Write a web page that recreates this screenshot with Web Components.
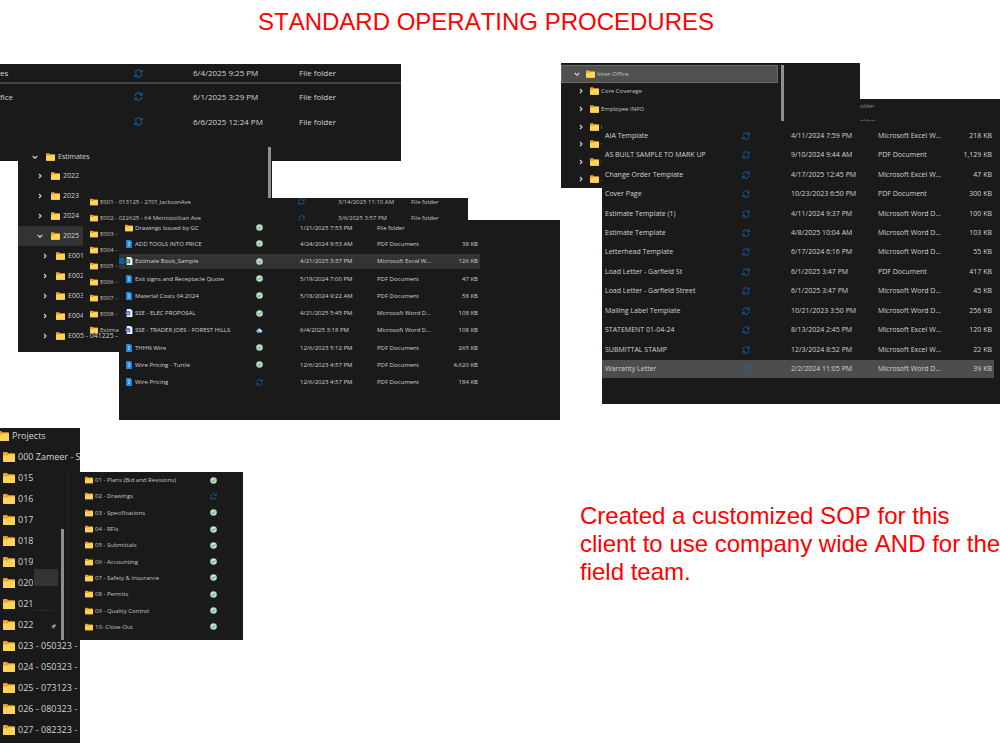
<!DOCTYPE html>
<html lang="en">
<head>
<meta charset="UTF-8">
<meta name="viewport" content="width=device-width, initial-scale=1.0">
<title>Standard Operating Procedures</title>
<style>
    body {
        margin: 0;
        background: white;
        font-family: "Open Sans", "Noto Sans", sans-serif;
        overflow-x: hidden;
    }
    /* explorer windows are pasted freely over each other */
    explorer-window {
        position: absolute;
    }
    #shares { left: 0; top: 1px; width: 401px; height: 97px; --row: 25px; --first: 18px; --text: 8px; --status: 9px; }
    #estimates { left: 18px; top: 84px; width: 254px; height: 205px; --row: 20px; --first: 19px; --text: 7px; --start: 12px; --indent: 5px; }
    #jobs { left: 83px; top: 135px; width: 385px; height: 133px; --row: 16px; --first: 12px; --first-align: top; --text: 6px; --icon: 8px; --status: 7px; --overflow: visible; --color: #c4c4c4; }
    #pricing { left: 119px; top: 157px; width: 441px; height: 200px; --row: 17px; --first: 15px; --text: 6px; --icon: 8px; --status: 7px; --table-height: 171px; }
    #projects { left: 0; top: 0; width: 80px; height: 315px; --row: 21px; --first: 15px; --first-gap: 3px; --text: 9px; --start: -3px; --indent: 6px; --folder: 12px; --folder-height: 10px; }
    #sections { left: 33px; top: 44px; width: 210px; height: 168px; --row: 16px; --first: 16px; --text: 6px; --icon: 8px; --status: 7px; --table-height: 163px; --color: #c4c4c4; }
    #folders { right: 0; top: 36px; width: 140px; height: 60px; --row: 16px; --first: 14px; --text: 6px; --color: #8c8c8c; }
    #office { left: 1px; top: 0; width: 299px; height: 125px; --row: 18px; --first: 18px; --text: 6px; --start: 11px; --indent: 4px; --chevron-gap: 4px; --label-gap: 2px; --folder: 9px; --selected: #505050; --color: #c4c4c4; }
    #templates { right: 0; top: 58px; width: 398px; height: 283px; --row: 19px; --first: 19px; --text: 7px; --status: 8px; --table-height: 253px; --selected: #4d4d4d; }
</style>
</head>
<body>
    <sop-board>
        <span slot="title">STANDARD OPERATING PROCEDURES</span>
        <explorer-window slot="estimating" id="shares"><file-table source="shares"></file-table></explorer-window>
        <explorer-window slot="estimating" id="estimates" bar><folder-tree source="estimates"></folder-tree></explorer-window>
        <explorer-window slot="estimating" id="jobs"><file-table source="jobs"></file-table></explorer-window>
        <explorer-window slot="estimating" id="pricing"><file-table source="pricing"></file-table></explorer-window>
        <explorer-window slot="projects" id="projects"><folder-tree source="projects"></folder-tree></explorer-window>
        <explorer-window slot="projects" id="sections"><nav-strip></nav-strip><file-table source="sections"></file-table></explorer-window>
        <explorer-window slot="office" id="folders"><file-table source="folders"></file-table></explorer-window>
        <explorer-window slot="office" id="office" bar><folder-tree source="office"></folder-tree></explorer-window>
        <explorer-window slot="office" id="templates"><file-table source="templates"></file-table></explorer-window>
        <span slot="note">Created a customized SOP for this<br>client to use company wide AND for the<br>field team.</span>
    </sop-board>

<script>
    const ICONS = {
        folder: `<svg viewBox="0 0 12 10"><path d="M0 .8Q0 0 .8 0H4l1.300 1.300h5.900q.8 0 .8.8V9.200q0 .8-.8.8H.8Q0 10 0 9.200Z" fill="#eba51f"/><path d="M0 3.400h4.600l1-1H11.200q.8 0 .8.8V9.200q0 .8-.8.8H.8Q0 10 0 9.200Z" fill="#ffd35c"/></svg>`,
        sync: `<svg viewBox="0 0 16 16" fill="none" stroke="#0f6cb8" stroke-width="1.700"><path d="M2 7A6 6 0 0 1 13.200 4.500M14.500 1v4.500H10M14 9A6 6 0 0 1 2.800 11.500M1.500 15v-4.500H6"/></svg>`,
        ok: `<svg viewBox="0 0 16 16"><circle cx="8" cy="8" r="7.500" fill="#b9dfc2"/><path d="M4.500 8.200l2.500 2.500 4.500-5" fill="none" stroke="#3f6a4a" stroke-width="1.600"/></svg>`,
        cloud: `<svg viewBox="0 0 16 16"><path d="M4 12.500a3 3 0 0 1 0-6 4 4 0 0 1 7.500-.5A3.300 3.300 0 0 1 12 12.500Z" fill="#b9dcf7"/><path d="M4 12.500a3 3 0 0 1 0-5l8 5Z" fill="#5da4e0"/></svg>`,
        pdf: `<svg viewBox="0 0 12 14"><path d="M1 0H8.500l2.500 2.500V14H1Z" fill="#1f8fe6"/><path d="M4 4.500h4M4 7h4M4 9.500h4" stroke="#c4e3fb" stroke-width="1.200"/></svg>`,
        excel: `<svg viewBox="0 0 12 14"><path d="M2 0h7l3 3v11H2Z" fill="#f2f5f2"/><rect y="4" width="8" height="7" rx="1" fill="#1b8a4b"/><path d="M2.500 5.500l3 4M5.500 5.500l-3 4" stroke="#fff"/></svg>`,
        word: `<svg viewBox="0 0 12 14"><path d="M2 0h7l3 3v11H2Z" fill="#f2f4fa"/><rect y="4" width="8" height="7" rx="1" fill="#2860c8"/><path d="M1.800 5.500l1 4 1.200-3 1.200 3 1-4" fill="none" stroke="#fff" stroke-width=".8"/></svg>`,
        right: `<svg viewBox="0 0 10 10" fill="none" stroke="#d0d0d0" stroke-width="1.100"><path d="M4 3L6 5 4 7"/></svg>`,
        down: `<svg viewBox="0 0 10 10" fill="none" stroke="#d0d0d0" stroke-width="1.100"><path d="M2.700 4L5 6.200 7.300 4"/></svg>`,
        pin: `<svg viewBox="0 0 10 10"><path d="M6 1l3 3-1 .5L6.500 6 6 8.500 4 6.500 1 9l2.500-3L1.500 4 4 3.500 5.500 2Z" fill="#8d969e"/></svg>`
    };

    // cols: widths of name, status, date, type, size
    const TABLES = {
        shares: {
            cols: [133, 60, 106, 102],
            line: true,
            rows: [
                { name: 'es', status: 'sync', date: '6/4/2025 9:25 PM', type: 'File folder' },
                { name: 'fice', status: 'sync', date: '6/1/2025 3:29 PM', type: 'File folder' },
                { name: '', status: 'sync', date: '6/6/2025 12:24 PM', type: 'File folder' }
            ]
        },
        jobs: {
            cols: [214, 41, 73, 57],
            pad: 7,
            rows: [
                { icon: 'folder', name: 'E001 - 013125 - 2701 JacksonAve', status: 'sync', date: '3/14/2025 11:10 AM', type: 'File folder' },
                { icon: 'folder', name: 'E002 - 022625 - 64 Metropolitan Ave', status: 'sync', date: '3/6/2025 3:57 PM', type: 'File folder' },
                { icon: 'folder', name: 'E003 - 0' },
                { icon: 'folder', name: 'E004 - 0' },
                { icon: 'folder', name: 'E005 - 0' },
                { icon: 'folder', name: 'E006 - 0' },
                { icon: 'folder', name: 'E007 - 0' },
                { icon: 'folder', name: 'E008 - 0' },
                { icon: 'folder', name: 'Estimates' }
            ]
        },
        pricing: {
            cols: [136, 45, 77, 60, 43],
            pad: 6,
            rows: [
                { icon: 'folder', name: 'Drawings Issued by GC', status: 'ok', date: '1/21/2025 7:53 PM', type: 'File folder', size: '' },
                { icon: 'pdf', name: 'ADD TOOLS INTO PRICE', status: 'ok', date: '4/24/2024 9:53 AM', type: 'PDF Document', size: '38 KB' },
                { icon: 'excel', name: 'Estimate Book_Sample', status: 'ok', date: '4/21/2025 3:37 PM', type: 'Microsoft Excel W...', size: '126 KB', selected: true, check: true },
                { icon: 'pdf', name: 'Exit signs and Receptacle Quote', status: 'ok', date: '5/19/2024 7:00 PM', type: 'PDF Document', size: '47 KB' },
                { icon: 'pdf', name: 'Material Costs 04.2024', status: 'ok', date: '5/18/2024 9:22 AM', type: 'PDF Document', size: '58 KB' },
                { icon: 'word', name: 'SSE - ELEC PROPOSAL', status: 'ok', date: '4/21/2025 5:45 PM', type: 'Microsoft Word D...', size: '108 KB' },
                { icon: 'word', name: 'SSE - TRADER JOES - FOREST HILLS', status: 'cloud', date: '6/4/2025 3:18 PM', type: 'Microsoft Word D...', size: '108 KB' },
                { icon: 'pdf', name: 'THHN Wire', status: 'ok', date: '12/6/2023 5:12 PM', type: 'PDF Document', size: '265 KB' },
                { icon: 'pdf', name: 'Wire Pricing - Turtle', status: 'ok', date: '12/6/2023 4:57 PM', type: 'PDF Document', size: '4,620 KB' },
                { icon: 'pdf', name: 'Wire Pricing', status: 'sync', date: '12/6/2023 4:57 PM', type: 'PDF Document', size: '184 KB' }
            ]
        },
        sections: {
            cols: [141, 34],
            pad: 17,
            rows: [
                { icon: 'folder', name: '01 - Plans (Bid and Revisions)', status: 'ok' },
                { icon: 'folder', name: '02 - Drawings', status: 'sync' },
                { icon: 'folder', name: '03 - Specifications', status: 'ok' },
                { icon: 'folder', name: '04 - RFIs', status: 'ok' },
                { icon: 'folder', name: '05 - Submittals', status: 'ok' },
                { icon: 'folder', name: '06 - Accounting', status: 'ok' },
                { icon: 'folder', name: '07 - Safety & Insurance', status: 'ok' },
                { icon: 'folder', name: '08 - Permits', status: 'ok' },
                { icon: 'folder', name: '09 - Quality Control', status: 'ok' },
                { icon: 'folder', name: '10- Close-Out', status: 'ok' }
            ]
        },
        folders: {
            cols: [140],
            rows: [{ name: 'older' }, { name: 'older' }]
        },
        templates: {
            cols: [139, 50, 87, 70, 46],
            pad: 3,
            top: 5,
            rows: [
                { name: 'AIA Template', status: 'sync', date: '4/11/2024 7:59 PM', type: 'Microsoft Excel W...', size: '218 KB' },
                { name: 'AS BUILT SAMPLE TO MARK UP', status: 'sync', date: '9/10/2024 9:44 AM', type: 'PDF Document', size: '1,129 KB' },
                { name: 'Change Order Template', status: 'sync', date: '4/17/2025 12:45 PM', type: 'Microsoft Excel W...', size: '47 KB' },
                { name: 'Cover Page', status: 'sync', date: '10/23/2023 6:50 PM', type: 'PDF Document', size: '300 KB' },
                { name: 'Estimate Template (1)', status: 'sync', date: '4/11/2024 9:37 PM', type: 'Microsoft Word D...', size: '100 KB' },
                { name: 'Estimate Template', status: 'sync', date: '4/8/2025 10:04 AM', type: 'Microsoft Word D...', size: '103 KB' },
                { name: 'Letterhead Template', status: 'sync', date: '6/17/2024 6:16 PM', type: 'Microsoft Word D...', size: '55 KB' },
                { name: 'Load Letter - Garfield St', status: 'sync', date: '6/1/2025 3:47 PM', type: 'PDF Document', size: '417 KB' },
                { name: 'Load Letter - Garfield Street', status: 'sync', date: '6/1/2025 3:47 PM', type: 'Microsoft Word D...', size: '45 KB' },
                { name: 'Mailing Label Template', status: 'sync', date: '10/21/2023 3:50 PM', type: 'Microsoft Word D...', size: '256 KB' },
                { name: 'STATEMENT 01-04-24', status: 'sync', date: '8/13/2024 2:45 PM', type: 'Microsoft Excel W...', size: '120 KB' },
                { name: 'SUBMITTAL STAMP', status: 'sync', date: '12/3/2024 8:52 PM', type: 'Microsoft Excel W...', size: '22 KB' },
                { name: 'Warranty Letter', status: 'sync', date: '2/2/2024 11:05 PM', type: 'Microsoft Word D...', size: '39 KB', selected: true }
            ]
        }
    };

    // each node: level, label, state of the chevron
    const TREES = {
        estimates: {
            nodes: [
                [0, 'Estimates', 'down'], [1, '2022', 'right'], [1, '2023', 'right'], [1, '2024', 'right'],
                [1, '2025', 'down', 'selected'], [2, 'E001', 'right'], [2, 'E002', 'right'], [2, 'E003', 'right'],
                [2, 'E004', 'right'], [2, 'E005 - 041225 -', 'right'], [2, '', 'right']
            ]
        },
        projects: {
            nodes: [
                [0, 'Projects'], [1, '000 Zameer - S'], [1, '015'], [1, '016'], [1, '017-'], [1, '018'], [1, '019'],
                [1, '020'], [1, '021'], [1, '022'], [1, '023 - 050323 -'], [1, '024 - 050323 -'],
                [1, '025 - 073123 -'], [1, '026 - 080323 -'], [1, '027 - 082323 -']
            ]
        },
        office: {
            top: 2,
            height: 123,
            nodes: [
                [0, 'Inter-Office', 'down', 'selected outlined'], [1, 'Core Coverage', 'right'], [1, 'Employee INFO', 'right'],
                [1, 'I', 'right'], [1, ':', 'right'], [1, ':', 'right'], [1, '.', 'right']
            ]
        }
    };

    class SopBoard extends HTMLElement {
        constructor() {
            super();
            this.attachShadow({ mode: 'open' });
        }

        connectedCallback() {
            this.shadowRoot.innerHTML = `
                <style>
                :host {
                    display: block;
                    color: #ff0000;
                }
                h1, p {
                    margin: 0;
                    font: 24px/28px "Liberation Sans", Arial, sans-serif;
                    font-kerning: none;
                }
                h1 {
                    padding: 8px 28px 27px 0;
                    text-align: center;
                }
                main {
                    display: grid;
                    grid-template-columns: 14fr 11fr;
                }
                .column {
                    min-width: 0;
                }
                .stack {
                    position: relative;
                    min-height: 365px;
                }
                .projects {
                    min-height: 316px;
                }
                .office {
                    min-height: 439px;
                }
                p {
                    padding-left: 20px;
                    white-space: nowrap;
                }
                </style>
                <h1><slot name="title"></slot></h1>
                <main>
                    <div class="column">
                        <div class="stack"><slot name="estimating"></slot></div>
                        <div class="stack projects"><slot name="projects"></slot></div>
                    </div>
                    <div class="column">
                        <div class="stack office"><slot name="office"></slot></div>
                        <p><slot name="note"></slot></p>
                    </div>
                </main>
            `;
        }
    }

    class ExplorerWindow extends HTMLElement {
        constructor() {
            super();
            this.attachShadow({ mode: 'open' });
        }

        connectedCallback() {
            this.shadowRoot.innerHTML = `
                <style>
                :host {
                    display: flex;
                    overflow: var(--overflow, hidden);
                    background: #1a1a1a;
                    color: var(--color, #d2d2d2);
                    font-size: var(--text);
                    line-height: 8px;
                }
                .bar {
                    width: 3px;
                    margin-right: 1px;
                    background: #8f8f8f;
                }
                :host(#office) .bar {
                    margin: 2px 76px 0 3px;
                }
                </style>
                <slot></slot>
                ${this.hasAttribute('bar') ? '<div class="bar"></div>' : ''}
            `;
        }
    }

    class FileTable extends HTMLElement {
        constructor() {
            super();
            this.attachShadow({ mode: 'open' });
        }

        getRow(row, count) {
            const cells = [
                `<td class="name"><div>${row.check ? '<i class="check"></i>' : ''}${row.icon ? ICONS[row.icon] : ''}<span>${row.name.replace('&', '&amp;')}</span></div></td>`,
                `<td class="status">${row.status ? ICONS[row.status] : ''}</td>`,
                `<td>${row.date || ''}</td>`,
                `<td>${row.type || ''}</td>`,
                `<td class="size">${row.size || ''}</td>`
            ];
            return `<tr class="${row.selected ? 'selected' : ''}">${cells.slice(0, count).join('')}</tr>`;
        }

        connectedCallback() {
            const table = TABLES[this.getAttribute('source')];
            const width = table.cols.reduce((a, b) => a + b, 0);
            this.shadowRoot.innerHTML = `
                <style>
                :host {
                    display: block;
                    padding-top: ${table.top || 0}px;
                }
                table {
                    width: ${width}px;
                    height: var(--table-height, auto);
                    table-layout: fixed;
                    border-collapse: separate;
                    border-spacing: 0;
                }
                td {
                    height: var(--row);
                    box-sizing: border-box;
                    padding: 0;
                    white-space: nowrap;
                    vertical-align: middle;
                }
                tr:first-child td {
                    height: var(--first);
                    vertical-align: var(--first-align, middle);
                }
                .line tr:first-child td {
                    box-sizing: content-box;
                    border-bottom: 2px solid #444;
                }
                .selected td {
                    background: var(--selected, #333);
                    background-clip: padding-box;
                    border: solid transparent;
                    border-width: 1px 0;
                }
                .name div {
                    display: flex;
                    align-items: center;
                    gap: 2px;
                    position: relative;
                    padding-left: ${table.pad || 0}px;
                }
                svg {
                    display: block;
                    width: var(--icon);
                    height: var(--icon);
                    flex: none;
                }
                .status svg {
                    width: var(--status);
                    height: var(--status);
                    margin-left: 1px;
                }
                .check {
                    position: absolute;
                    left: 0;
                    width: 5px;
                    height: 6px;
                    background: #0a5fb4;
                }
                .size {
                    text-align: right;
                    padding-right: 2px;
                }
                </style>
                <table class="${table.line ? 'line' : ''}">
                    <colgroup>${table.cols.map(w => `<col style="width:${w}px">`).join('')}</colgroup>
                    <tbody>${table.rows.map(row => this.getRow(row, table.cols.length)).join('')}</tbody>
                </table>
            `;
        }
    }

    class FolderTree extends HTMLElement {
        constructor() {
            super();
            this.attachShadow({ mode: 'open' });
        }

        getNode([level, label, chevron, state]) {
            return `
                <li class="${state || ''}">
                    <div style="--level:${level}">
                        ${chevron ? `<button aria-label="Toggle ${label}">${ICONS[chevron]}</button>` : ''}
                        ${ICONS.folder}
                        <span>${label}</span>
                    </div>
                </li>`;
        }

        connectedCallback() {
            const tree = TREES[this.getAttribute('source')];
            this.shadowRoot.innerHTML = `
                <style>
                :host {
                    display: block;
                    flex: 1;
                    min-width: 0;
                    padding-top: ${tree.top || 0}px;
                }
                ul {
                    display: flex;
                    flex-direction: column;
                    height: ${tree.height ? tree.height + 'px' : 'auto'};
                    margin: 0;
                    padding: 0;
                    list-style: none;
                }
                li {
                    display: flex;
                    align-items: center;
                    flex: 0 1 var(--row);
                    white-space: nowrap;
                }
                li:first-child {
                    flex-basis: var(--first);
                    margin-bottom: var(--first-gap, 0);
                }
                li div {
                    display: flex;
                    align-items: center;
                    margin-left: calc(var(--start) + var(--level) * var(--indent));
                }
                .selected {
                    background: var(--selected, #333);
                }
                .outlined {
                    box-shadow: inset 0 0 0 1px #6a6a6a;
                }
                button {
                    width: 10px;
                    height: 10px;
                    margin-right: var(--chevron-gap, 6px);
                    padding: 0;
                    border: none;
                    background: none;
                }
                svg {
                    display: block;
                    flex: none;
                    width: var(--folder, 9px);
                    height: var(--folder-height, 8px);
                    margin-right: var(--label-gap, 3px);
                }
                button svg {
                    width: 10px;
                    height: 10px;
                }
                </style>
                <ul>${tree.nodes.map(node => this.getNode(node)).join('')}</ul>
            `;
        }
    }

    class NavStrip extends HTMLElement {
        constructor() {
            super();
            this.attachShadow({ mode: 'open' });
        }

        connectedCallback() {
            this.shadowRoot.innerHTML = `
                <style>
                :host {
                    display: flex;
                    width: 34px;
                    border-right: 1px solid #262626;
                }
                .items {
                    width: 25px;
                    padding-top: 97px;
                }
                .hover {
                    height: 17px;
                    margin-left: 1px;
                    background: #333;
                }
                .rule {
                    height: 24px;
                    margin-right: 5px;
                    border-bottom: 1px solid #2a2a2a;
                }
                svg {
                    display: block;
                    width: 7px;
                    height: 7px;
                    margin: 12px 0 0 17px;
                }
                .bar {
                    width: 3px;
                    margin: 57px 0 0 3px;
                    background: #8f8f8f;
                }
                </style>
                <div class="items">
                    <div class="hover"></div>
                    <div class="rule"></div>
                    ${ICONS.pin}
                </div>
                <div class="bar"></div>
            `;
        }
    }

    customElements.define('sop-board', SopBoard);
    customElements.define('explorer-window', ExplorerWindow);
    customElements.define('file-table', FileTable);
    customElements.define('folder-tree', FolderTree);
    customElements.define('nav-strip', NavStrip);
</script>
</body>
</html>
